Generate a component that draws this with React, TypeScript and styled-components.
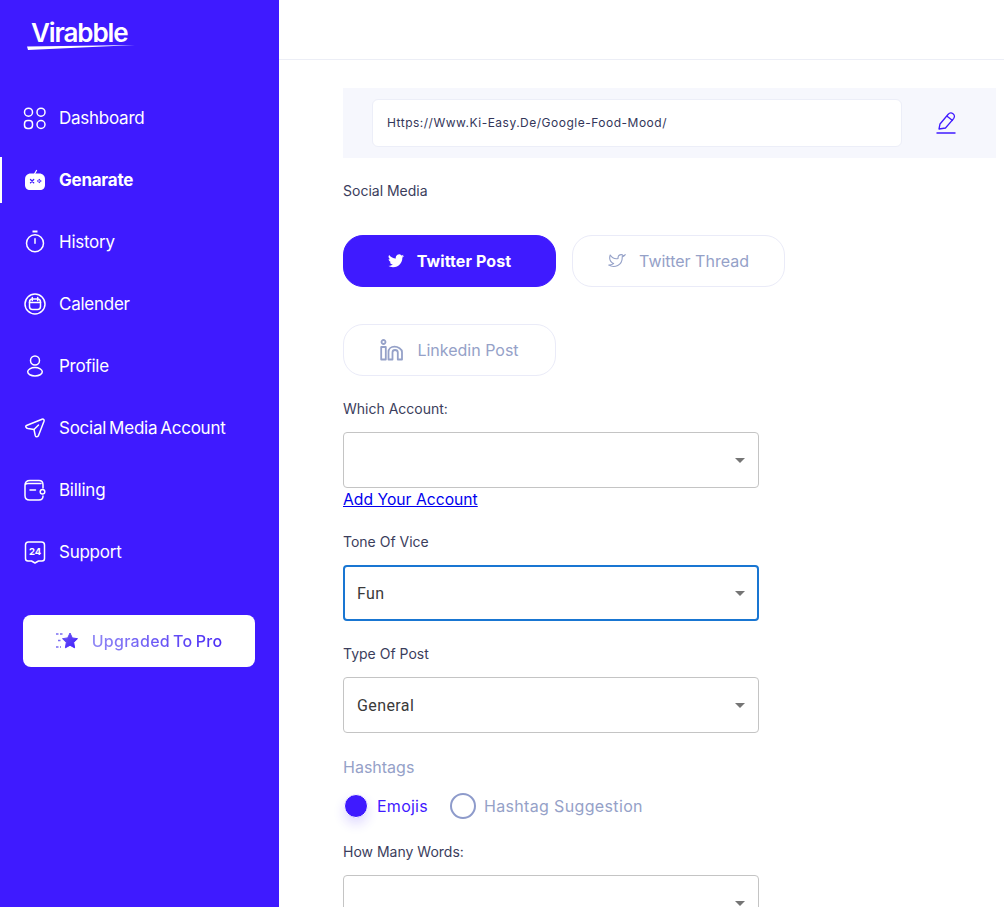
import styled, { createGlobalStyle } from "styled-components";

const GlobalStyle = createGlobalStyle`
    html, body {
        margin: 0;
        padding: 0;
        height: 100%;
        overflow: hidden;
        background: #fff;
    }

    * {
        box-sizing: border-box;
    }
`;

const Page = styled.div`
    display: flex;
    width: 1004px;
    height: 907px;
    overflow: hidden;
    font-family: "Inter", "Liberation Sans", sans-serif;
`;

const Sidebar = styled.aside`
    flex: 0 0 279px;
    height: 100%;
    background: #3f1aff;
    color: #fff;
`;

const LogoBox = styled.div`
    height: 95px;
    padding: 15px 0 0 31px;
    position: relative;
`;

const LogoText = styled.div`
    font-size: 26px;
    line-height: 36px;
    font-weight: 600;
    letter-spacing: -1.1px;
`;

const LogoSwoosh = styled.svg`
    position: absolute;
    left: 27px;
    top: 45px;
`;

const Nav = styled.nav`
    display: flex;
    flex-direction: column;
    gap: 16px;
`;

const NavItem = styled.a<{ $active?: boolean }>`
    display: flex;
    align-items: center;
    gap: 12px;
    height: 46px;
    padding-left: 23px;
    border-left: 2px solid ${(p) => (p.$active ? "#fff" : "transparent")};
    font-size: 17px;
    font-weight: ${(p) => (p.$active ? 700 : 400)};
    letter-spacing: -0.25px;
    word-spacing: -1.5px;
    color: #fff;

    svg {
        flex: 0 0 24px;
        margin-left: -2px;
    }
`;

const UpgradeButton = styled.button`
    display: flex;
    align-items: center;
    justify-content: center;
    gap: 14px;
    width: 232px;
    height: 52px;
    margin: 40px 0 0 23px;
    padding: 0;
    border: 0;
    border-radius: 8px;
    background: #fff;
    font-family: inherit;
    font-size: 16px;
    font-weight: 500;
    letter-spacing: 0.3px;
    word-spacing: -1.5px;
`;

const UpgradeText = styled.span`
    background: linear-gradient(90deg, #8f87f5, #4a2bf5);
    -webkit-background-clip: text;
    background-clip: text;
    color: transparent;
`;

const Main = styled.main`
    flex: 1;
    min-width: 0;
    background: #fff;
`;

const TopBar = styled.header`
    height: 60px;
    border-bottom: 1px solid #eceef6;
`;

const Content = styled.div`
    padding: 28px 8px 0 64px;
`;

const UrlBar = styled.div`
    display: flex;
    align-items: center;
    height: 70px;
    padding-left: 29px;
    background: #f6f7fd;
`;

const UrlField = styled.div`
    display: flex;
    align-items: center;
    width: 530px;
    height: 48px;
    padding: 0 0 2px 14px;
    border: 1px solid #eceef8;
    border-radius: 6px;
    background: #fff;
    font-size: 12px;
    letter-spacing: 0.5px;
    color: #33365a;
`;

const EditButton = styled.span`
    display: flex;
    margin-left: 34px;
`;

const Label = styled.div`
    font-size: 14px;
    line-height: 20px;
    color: #3b3d5c;
`;

const SocialLabel = styled(Label)`
    margin-top: 23px;
`;

const PlatformGrid = styled.div`
    display: flex;
    flex-wrap: wrap;
    gap: 37px 16px;
    margin-top: 34px;
`;

const PlatformButton = styled.button<{ $active?: boolean }>`
    display: flex;
    align-items: center;
    justify-content: center;
    gap: 13px;
    width: 213px;
    height: 52px;
    border-radius: 20px;
    border: 1px solid ${(p) => (p.$active ? "#3f1aff" : "#eaebf8")};
    background: ${(p) => (p.$active ? "#3f1aff" : "#fff")};
    color: ${(p) => (p.$active ? "#fff" : "#95a1c8")};
    font-family: inherit;
    font-size: 16px;
    font-weight: ${(p) => (p.$active ? 700 : 400)};
    letter-spacing: ${(p) => (p.$active ? "0.1px" : "0")};
`;

const Field = styled.div<{ $top: number }>`
    margin-top: ${(p) => p.$top}px;
`;

const SelectBox = styled.div<{ $focused?: boolean }>`
    display: flex;
    align-items: center;
    justify-content: space-between;
    width: 416px;
    height: 56px;
    margin-top: 13px;
    padding: ${(p) => (p.$focused ? "0 12px 0 12px" : "0 13px 0 13px")};
    border: ${(p) => (p.$focused ? "2px solid #1976d2" : "1px solid #c4c4c4")};
    border-radius: 4px;
    font-family: "Roboto", "Liberation Sans", sans-serif;
    font-size: 16px;
    letter-spacing: 0.4px;
    color: #3a3a3a;
`;

const Caret = styled.span`
    width: 0;
    height: 0;
    border-left: 5px solid transparent;
    border-right: 5px solid transparent;
    border-top: 5px solid #757575;
`;

const AccountLink = styled.a`
    display: block;
    width: max-content;
    padding-top: 1px;
    font-size: 15.7px;
    line-height: 22px;
    color: #0000ee;
    text-decoration: underline;
`;

const HashtagTitle = styled.div`
    margin-top: 23px;
    font-size: 16px;
    line-height: 22px;
    color: #95a1c8;
`;

const RadioRow = styled.div`
    display: flex;
    align-items: center;
    height: 26px;
    margin-top: 15px;
`;

const RadioDot = styled.span<{ $checked?: boolean }>`
    flex: none;
    width: ${(p) => (p.$checked ? 24 : 26)}px;
    height: ${(p) => (p.$checked ? 24 : 26)}px;
    margin: ${(p) => (p.$checked ? "0 9px 0 1px" : "0 8px 0 22px")};
    border-radius: 50%;
    border: ${(p) => (p.$checked ? "1px solid #fff" : "2px solid #8e9bcb")};
    background: ${(p) => (p.$checked ? "#3f1aff" : "#fff")};
    box-shadow: ${(p) => (p.$checked ? "0 6px 12px rgba(63, 26, 255, 0.16)" : "none")};
`;

const RadioLabel = styled.span<{ $checked?: boolean }>`
    font-size: 16px;
    letter-spacing: ${(p) => (p.$checked ? "0.25px" : "0.35px")};
    color: ${(p) => (p.$checked ? "#3f1aff" : "#95a1c8")};
`;

const WordsLabel = styled(Label)`
    margin-top: 23px;
`;

const iconProps = {
    width: 24,
    height: 24,
    viewBox: "0 0 24 24",
    fill: "none",
    stroke: "currentColor",
    strokeWidth: 1.5,
    strokeLinecap: "round" as const,
    strokeLinejoin: "round" as const,
};

const DashboardIcon = () => (
    <svg {...iconProps}>
        <circle cx="5.5" cy="6.2" r="4" />
        <circle cx="18" cy="6.2" r="4" />
        <rect x="1.5" y="14.5" width="8" height="8" rx="3.2" />
        <circle cx="18" cy="18.5" r="4" />
    </svg>
);

const GameIcon = () => (
    <svg {...iconProps} stroke="none" fill="#fff">
        <path d="M8 5.5h8c4 0 6 2.5 6 6V17c0 3-2 5-5 5H7c-3 0-5-2-5-5v-5.500c0-3.500 2-6 6-6z" />
        <path d="M11.500 6l2-3.500" stroke="#fff" strokeWidth="1.200" fill="none" />
        <path d="M7.500 11.500l3.200 3.200M10.700 11.500l-3.200 3.200" stroke="#3f1aff" strokeWidth="1.300" />
        <path d="M16.300 10.800l1 1-1 1-1-1zM16.300 13.300l1 1-1 1-1-1zM14.900 12.100l1 1-1 1-1-1zM17.700 12.100l1 1-1 1-1-1z" fill="#3f1aff" />
    </svg>
);

const TimerIcon = () => (
    <svg {...iconProps}>
        <circle cx="12" cy="13.2" r="8.500" />
        <path d="M12 8.800v4.400" />
        <path d="M9.500 1.500h5" strokeWidth="2" strokeLinecap="butt" />
    </svg>
);

const CalendarIcon = () => (
    <svg {...iconProps}>
        <circle cx="12" cy="12" r="10" />
        <rect x="6.500" y="7" width="11" height="10.500" rx="3" />
        <path d="M6.500 10.500h11M9.300 5.500v3M14.700 5.500v3" />
    </svg>
);

const ProfileIcon = () => (
    <svg {...iconProps}>
        <circle cx="12" cy="6.500" r="4.500" />
        <ellipse cx="12" cy="17.800" rx="7.300" ry="4.200" />
    </svg>
);

const SendIcon = () => (
    <svg {...iconProps}>
        <path d="M3.500 9.500L19 3.200c1.500-.5 2.500.5 2 2l-5.500 14.300c-.6 1.600-2.500 1.800-3.200.2L11 13.500l-6-1C3 12 2 10.200 3.500 9.500z" />
        <path d="M11 13.500L15.500 9" />
    </svg>
);

const WalletIcon = () => (
    <svg {...iconProps}>
        <path d="M20 10V7c0-2.500-1.500-4.500-4-4.500H7C4 2.500 2 4.500 2 7.500v10c0 2.700 1.800 4.500 4.500 4.500H16c2.500 0 4-1.500 4-4" />
        <path d="M2.500 6.500C3 5.500 4 5.500 5 5.500h13" />
        <path d="M7 12h5.500" />
        <circle cx="19.500" cy="13.800" r="2.300" />
    </svg>
);

const SupportIcon = () => (
    <svg {...iconProps}>
        <path d="M5.500 2h13c2 0 3 1 3 3v13.500c0 1.500-1 2.500-2.500 2.500h-3.500L12 23l-3.500-2H5c-1.500 0-2.500-1-2.500-2.500V5c0-2 1-3 3-3z" />
        <text
            x="12"
            y="15"
            textAnchor="middle"
            fontSize="9.500"
            fontWeight="700"
            fontFamily="Inter, sans-serif"
            fill="#fff"
            stroke="none"
        >
            24
        </text>
    </svg>
);

const StarFastIcon = () => (
    <svg width="22" height="20" viewBox="0 0 22 20">
        <defs>
            <linearGradient id="starFill" x1="0" y1="0" x2="1" y2="1">
                <stop offset="0" stopColor="#6f5cf0" />
                <stop offset="1" stopColor="#3f1aff" />
            </linearGradient>
        </defs>
        <path
            d="M14 2l2.300 4.900 5.200.8-3.800 3.700.9 5.400-4.600-2.500-4.600 2.500.9-5.400-3.800-3.700 5.200-.8z"
            fill="url(#starFill)"
            stroke="url(#starFill)"
            strokeLinejoin="round"
        />
        <path d="M0 3h7M2 9.500h4M0 16h5" stroke="#7a6cf2" strokeWidth="1.500" strokeDasharray="2.500 1.500" fill="none" />
    </svg>
);

const PencilIcon = () => (
    <svg width="20" height="24" viewBox="0 0 20 24" fill="none" stroke="#3f1aff" strokeWidth="1.300" strokeLinejoin="round">
        <path d="M3 18l1-5 8-9.500c1.500-1.800 3.500-2 5-.8 1.700 1.300 1.900 3.200.6 4.900L9.500 17z" />
        <path d="M10.800 5l6 4.700" />
        <path d="M0.500 22h19" strokeWidth="1.500" />
    </svg>
);

const TwitterFilled = () => (
    <svg width="16" height="14" viewBox="0 0 24 20" fill="#fff">
        <path d="M24 2.400a9.800 9.800 0 0 1-2.800.8A4.900 4.900 0 0 0 23.300.5a9.800 9.800 0 0 1-3.100 1.200 4.900 4.900 0 0 0-8.400 4.500A14 14 0 0 1 1.700.9a4.900 4.900 0 0 0 1.500 6.600 4.900 4.900 0 0 1-2.200-.6c0 2.400 1.700 4.400 3.900 4.900a4.900 4.900 0 0 1-2.200.1 4.900 4.900 0 0 0 4.600 3.400A9.900 9.900 0 0 1 0 17.300 13.900 13.900 0 0 0 7.500 19.500c9.100 0 14-7.500 14-14v-.6A10 10 0 0 0 24 2.400z" />
    </svg>
);

const TwitterOutline = () => (
    <svg width="18" height="16" viewBox="0 0 24 21" fill="none" stroke="#95a1c8" strokeWidth="1.500" strokeLinejoin="round">
        <path d="M23 2a9 9 0 0 1-2.600 1.600 3.900 3.900 0 0 0-7 2.600v1A10 10 0 0 1 3 2.500s-3.500 8 4.500 11.500A11.500 11.500 0 0 1 1 16c8 4.500 18 0 18-10.300 0-.3 0-.5-.1-.7A7.700 7.700 0 0 0 23 2z" />
    </svg>
);

const LinkedinIcon = () => (
    <svg width="24" height="22" viewBox="0 0 24 22" fill="none" stroke="#95a1c8" strokeWidth="1.800" strokeLinejoin="round">
        <circle cx="3.500" cy="3" r="2" />
        <rect x="1.200" y="8" width="4.600" height="12.500" />
        <path d="M8.500 20.500V13c0-3 2.500-5.300 6-5.300s7.500 2.300 7.500 5.300v7.500h-4.200V13.500c0-1.500-1.300-2.500-2.800-2.500s-2.500 1-2.500 2.500v7z" />
    </svg>
);

const navItems = [
    { label: "Dashboard", icon: <DashboardIcon /> },
    { label: "Genarate", icon: <GameIcon />, active: true },
    { label: "History", icon: <TimerIcon /> },
    { label: "Calender", icon: <CalendarIcon /> },
    { label: "Profile", icon: <ProfileIcon /> },
    { label: "Social Media Account", icon: <SendIcon /> },
    { label: "Billing", icon: <WalletIcon /> },
    { label: "Support", icon: <SupportIcon /> },
];

export const App = () => {
    return (
        <>
            <GlobalStyle />
            <Page>
                <Sidebar>
                    <LogoBox>
                        <LogoText>Virabble</LogoText>
                        <LogoSwoosh width="108" height="6" viewBox="0 0 108 6">
                            <path d="M0 1.500L108 0 60 2.200 1 5z" fill="#fff" />
                        </LogoSwoosh>
                    </LogoBox>
                    <Nav>
                        {navItems.map((item) => (
                            <NavItem key={item.label} $active={item.active}>
                                {item.icon}
                                {item.label}
                            </NavItem>
                        ))}
                    </Nav>
                    <UpgradeButton>
                        <StarFastIcon />
                        <UpgradeText>Upgraded To Pro</UpgradeText>
                    </UpgradeButton>
                </Sidebar>
                <Main>
                    <TopBar />
                    <Content>
                        <UrlBar>
                            <UrlField>Https://Www.Ki-Easy.De/Google-Food-Mood/</UrlField>
                            <EditButton>
                                <PencilIcon />
                            </EditButton>
                        </UrlBar>
                        <SocialLabel>Social Media</SocialLabel>
                        <PlatformGrid>
                            <PlatformButton $active>
                                <TwitterFilled />
                                Twitter Post
                            </PlatformButton>
                            <PlatformButton>
                                <TwitterOutline />
                                Twitter Thread
                            </PlatformButton>
                            <PlatformButton>
                                <LinkedinIcon />
                                Linkedin Post
                            </PlatformButton>
                        </PlatformGrid>
                        <Field $top={23}>
                            <Label>Which Account:</Label>
                            <SelectBox>
                                <span />
                                <Caret />
                            </SelectBox>
                            <AccountLink>Add Your Account</AccountLink>
                        </Field>
                        <Field $top={21}>
                            <Label>Tone Of Vice</Label>
                            <SelectBox $focused>
                                Fun
                                <Caret />
                            </SelectBox>
                        </Field>
                        <Field $top={23}>
                            <Label>Type Of Post</Label>
                            <SelectBox>
                                General
                                <Caret />
                            </SelectBox>
                        </Field>
                        <HashtagTitle>Hashtags</HashtagTitle>
                        <RadioRow>
                            <RadioDot $checked />
                            <RadioLabel $checked>Emojis</RadioLabel>
                            <RadioDot />
                            <RadioLabel>Hashtag Suggestion</RadioLabel>
                        </RadioRow>
                        <WordsLabel>How Many Words:</WordsLabel>
                        <SelectBox>
                            <span />
                            <Caret />
                        </SelectBox>
                    </Content>
                </Main>
            </Page>
        </>
    );
};

export default App;
